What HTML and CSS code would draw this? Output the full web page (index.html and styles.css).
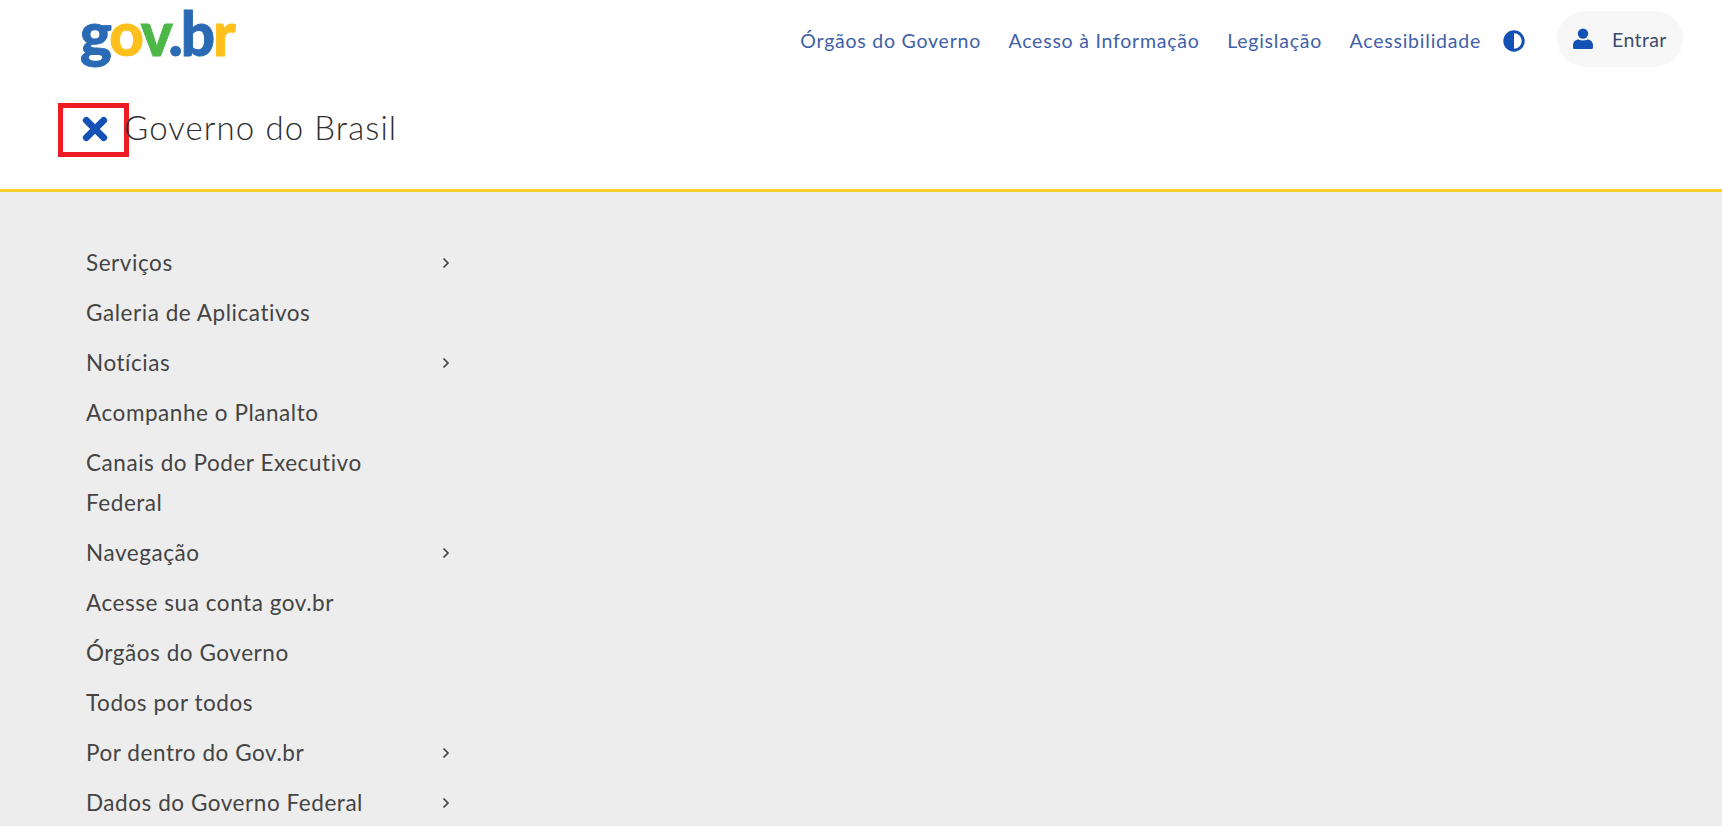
FILE: index.html
```html
<!DOCTYPE html>
<html lang="pt-BR">
<head>
<meta charset="utf-8">
<title>Governo do Brasil</title>
<link rel="stylesheet" href="styles.css">
</head>
<body>
<header class="header">
  <div class="top">
    <a class="logo"><span class="blue">g</span><span class="yellow">o</span><span class="green">v</span><span class="blue">.b</span><span class="yellow">r</span></a>
    <nav class="links">
      <a class="link">Órgãos do Governo</a>
      <a class="link">Acesso à Informação</a>
      <a class="link">Legislação</a>
      <a class="link">Acessibilidade</a>
    </nav>
    <svg class="contrast" viewBox="0 0 22 22"><circle cx="11" cy="11" r="9.2" fill="#fff" stroke="#1351b4" stroke-width="3"/><path d="M11 2a9 9 0 0 0 0 18z" fill="#1351b4"/></svg>
    <button class="login">
      <svg class="user" viewBox="0 0 20 22"><circle cx="10" cy="5.6" r="5.2" fill="#1351b4"/><path d="M0 19.5v-2.5c0-3.4 2.8-5.6 5.4-5.6 1.4.7 3 1 4.6 1s3.2-.3 4.6-1c2.6 0 5.4 2.2 5.4 5.6v2.5a1.6 1.6 0 0 1-1.6 1.5H1.6A1.6 1.6 0 0 1 0 19.5z" fill="#1351b4"/></svg>
      <span>Entrar</span>
    </button>
  </div>
  <div class="title-row">
    <div class="close-box">
      <svg class="close" viewBox="0 0 24 24"><path d="M4 4l16 16M20 4L4 20" stroke="#1351b4" stroke-width="6.400" stroke-linecap="round"/></svg>
    </div>
    <h1 class="title">Governo do Brasil</h1>
  </div>
</header>
<main class="panel">
  <ul class="menu">
    <li class="item">Serviços<svg class="chev" viewBox="0 0 8 12"><path d="M1.5 1.5L6 6l-4.500 4.500" /></svg></li>
    <li class="item">Galeria de Aplicativos</li>
    <li class="item">Notícias<svg class="chev" viewBox="0 0 8 12"><path d="M1.5 1.5L6 6l-4.500 4.500" /></svg></li>
    <li class="item">Acompanhe o Planalto</li>
    <li class="item">Canais do Poder Executivo Federal</li>
    <li class="item">Navegação<svg class="chev" viewBox="0 0 8 12"><path d="M1.5 1.5L6 6l-4.500 4.500" /></svg></li>
    <li class="item">Acesse sua conta gov.br</li>
    <li class="item">Órgãos do Governo</li>
    <li class="item">Todos por todos</li>
    <li class="item">Por dentro do Gov.br<svg class="chev" viewBox="0 0 8 12"><path d="M1.5 1.5L6 6l-4.500 4.500" /></svg></li>
    <li class="item">Dados do Governo Federal<svg class="chev" viewBox="0 0 8 12"><path d="M1.5 1.5L6 6l-4.500 4.500" /></svg></li>
  </ul>
</main>
</body>
</html>
```
FILE: styles.css
```css
* { box-sizing: border-box; }
html, body { margin: 0; height: 100%; overflow: hidden; }
body { font-family: "Open Sans", "Noto Sans", sans-serif; background: #ededed; color: #444; }
.header { height: 192px; background: #fff; border-bottom: 3px solid #f8cf2c; }
.top { height: 89px; display: flex; align-items: flex-start; padding: 11px 39px 0 80px; }
.logo { font-family: "Lato", sans-serif; font-weight: 900; font-size: 60px; line-height: 45px; letter-spacing: -2.1px; -webkit-text-stroke: .9px currentColor; }
.blue { color: #2a6ab5; }
.yellow { color: #fdc01c; }
.green { color: #4db848; }
.links { margin-left: auto; display: flex; gap: 27.5px; align-items: center; height: 58px; }
.link { font-family: "Lato", sans-serif; font-size: 19.5px; letter-spacing: .77px; color: #3f5fa8; white-space: nowrap; }
.contrast { width: 22px; height: 22px; margin: 19px 32px 0 22px; flex: none; }
.login { width: 126px; height: 56px; border: 0; border-radius: 28px; background: #f7f7f7; display: flex; align-items: center; gap: 19px; padding: 0 0 0 16px; font-family: "Lato", sans-serif; font-size: 19.5px; letter-spacing: .4px; color: #3d4c6e; }
.user { width: 20px; height: 22px; }
.title-row { display: flex; align-items: center; padding-left: 58px; height: 54px; margin-top: 14px; }
.close-box { width: 71px; height: 54px; border: 5px solid #ed1c24; display: flex; align-items: center; justify-content: center; flex: none; padding-left: 3px; }
.close { width: 26px; height: 26px; margin-top: -3px; }
.title { margin: -6px 0 0 -5px; font-family: "Lato", sans-serif; font-weight: 300; font-size: 33px; letter-spacing: 1.1px; color: #2e2e2e; }
.panel { padding: 46px 0 0 86px; }
.menu { list-style: none; margin: 0; padding: 0; width: 364px; }
.item { position: relative; font-family: "Lato", sans-serif; font-size: 22.5px; letter-spacing: .55px; line-height: 40px; padding: 5px 40px 5px 0; color: #444; }
.chev { position: absolute; right: 0; top: 19px; width: 8px; height: 12px; fill: none; stroke: #444; stroke-width: 1.7; }
```
